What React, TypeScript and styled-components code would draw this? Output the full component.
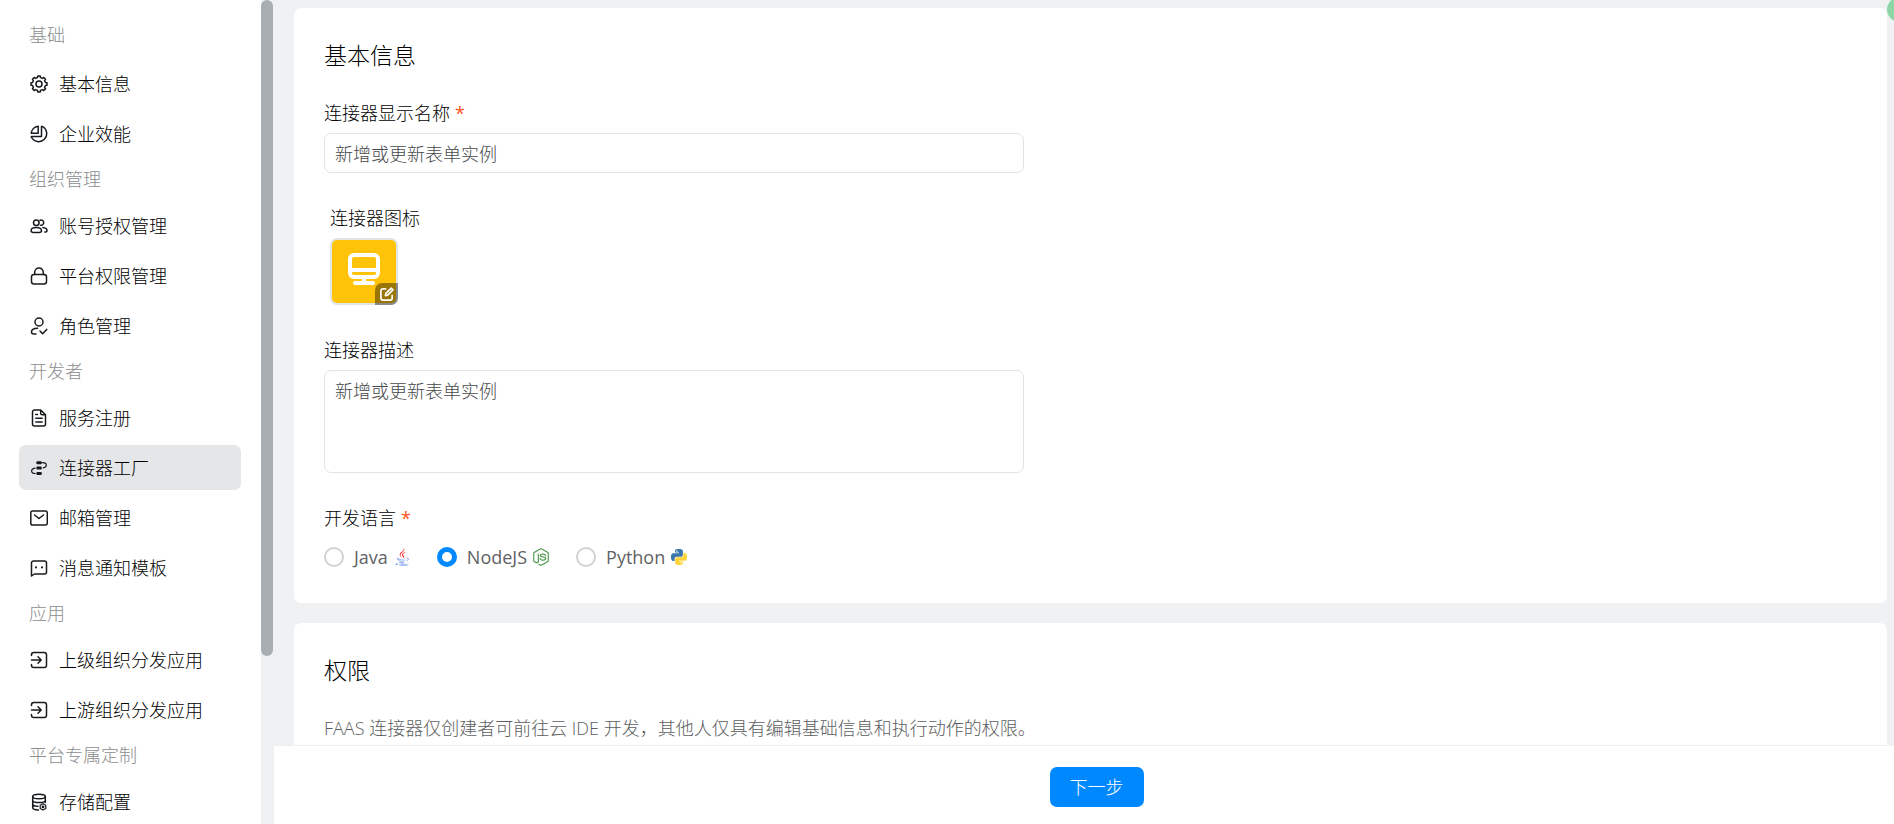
import React from "react";
import styled, { createGlobalStyle, css } from "styled-components";
import { FaJava, FaNodeJs } from "react-icons/fa";

const GlobalStyle = createGlobalStyle`
  * { box-sizing: border-box; }
  body {
    margin: 0;
    background: #f0f1f3;
    color: #000;
    font-family: "Open Sans", "Noto Sans CJK SC", sans-serif;
    font-size: 18px;
    font-weight: 300;
    line-height: 24px;
  }
  button, input, textarea { font: inherit; }
`;

const Page = styled.div`
  display: flex;
  height: 100vh;
  overflow: hidden;
`;

/* Sidebar */

const Sidebar = styled.aside`
  display: flex;
  flex: none;
  width: 274px;
  overflow: hidden;
`;

const Menu = styled.nav`
  flex: 1;
  padding: 17px 20px 0 19px;
  overflow: hidden;
  background: #fff;
`;

const ScrollRail = styled.div`
  flex: none;
  width: 13px;
`;

const ScrollThumb = styled.div`
  width: 12px;
  height: calc(100% - 168px);
  border-radius: 6px;
  background: #a9aeb2;
`;

const MenuGroup = styled.section`
  &:first-child > h2 { margin-bottom: 7px; }
`;

const GroupTitle = styled.h2`
  margin: 0 0 5px;
  padding-left: 10px;
  color: #8c8d8f;
  font-size: 18px;
  font-weight: 300;
  line-height: 37px;
`;

const MenuItem = styled.a<{ $active?: boolean }>`
  display: flex;
  align-items: center;
  gap: 11px;
  height: 45px;
  margin-bottom: 5px;
  padding-left: 11px;
  border-radius: 7px;
  color: #000;
  text-decoration: none;
  white-space: nowrap;
  ${({ $active }) => $active && css`background: #e5e6e8;`}
`;

const MenuIcon = styled.svg`
  flex: none;
  width: 18px;
  height: 18px;
  fill: none;
  stroke: #171a1d;
  color: #171a1d;
  stroke-width: 1.5;
  stroke-linecap: round;
  stroke-linejoin: round;
`;

/* Content */

const Main = styled.main`
  display: flex;
  flex: 1;
  flex-direction: column;
  min-width: 0;
`;

const Content = styled.div`
  display: flex;
  flex: 1;
  flex-direction: column;
  gap: 20px;
  min-height: 0;
  padding: 8px 7px 0 20px;
  overflow: auto;
  scrollbar-width: none;
`;

const Card = styled.section`
  flex: none;
  padding: 30px 30px 27px;
  border-radius: 7px;
  background: #fff;
`;

const CardTitle = styled.h1`
  margin: 0 0 29px;
  font-size: 23px;
  font-weight: 300;
  line-height: 34px;
`;

const Fields = styled.form`
  display: flex;
  flex-direction: column;
  gap: 33px;
`;

const Field = styled.div<{ $inset?: boolean }>`
  display: flex;
  flex-direction: column;
  align-items: flex-start;
  gap: 8px;
  max-width: 700px;
  padding-left: ${({ $inset }) => ($inset ? "6px" : "0")};
`;

const Label = styled.label``;

const RequiredMark = styled.span`
  margin-left: 5px;
  color: #ff5219;
  font-weight: 400;
`;

const controlStyle = css`
  width: 100%;
  border: 1px solid #e3e4e6;
  border-radius: 7px;
  outline: none;
  background: #fff;
  color: #47494b;
`;

const TextInput = styled.input`
  ${controlStyle}
  height: 40px;
  padding: 0 10px;
`;

const TextArea = styled.textarea`
  ${controlStyle}
  display: block;
  height: 103px;
  padding: 8px 10px;
  resize: none;
`;

const IconPicker = styled.button`
  position: relative;
  width: 68px;
  height: 67px;
  padding: 0;
  border: 2px solid #e3e4e6;
  border-radius: 7px;
  background: #ffc409;
  color: #fff;
`;

const EditBadge = styled.span`
  position: absolute;
  right: -2px;
  bottom: -2px;
  display: flex;
  align-items: center;
  justify-content: center;
  width: 23px;
  height: 22px;
  border-radius: 7px 0;
  background: rgba(0, 0, 0, 0.4);
`;

const Radios = styled.div`
  display: flex;
  align-items: center;
  gap: 27px;
  height: 38px;
`;

const RadioLabel = styled.label`
  display: flex;
  align-items: center;
  color: #606265;
  font-weight: 400;
`;

const Radio = styled.input`
  width: 20px;
  height: 20px;
  margin: 0 10px 0 0;
  appearance: none;
  border: 2px solid #d0d2d5;
  border-radius: 50%;
  background: #fff;
  &:checked { border: 5px solid #0089ff; }
`;

const LanguageIcon = styled.span`
  display: flex;
  justify-content: center;
  width: 16px;
  margin-left: 6px;
`;

const JavaLogo = styled(FaJava)`
  fill: url(#java-ink);
`;

const Hint = styled.p`
  margin: 0;
  color: #5c5e60;
`;

const Footer = styled.footer`
  display: flex;
  flex: none;
  justify-content: center;
  padding: 21px 0 17px 25px;
  border-top: 1px solid #eeeff0;
  background: #fff;
`;

const PrimaryButton = styled.button`
  height: 40px;
  padding: 0 20px;
  border: 0;
  border-radius: 7px;
  background: #0089ff;
  color: #fff;
`;

const FloatingDot = styled.div`
  position: fixed;
  top: -3px;
  right: -18px;
  width: 25px;
  height: 25px;
  border-radius: 50%;
  background: #8dd7a7;
`;

/* Outline of an eight-toothed gear centred in an 18 unit box. */
const gearPoints = Array.from({ length: 8 }, (_, tooth) =>
  [
    [-13, 6.6],
    [-9, 8.1],
    [9, 8.1],
    [13, 6.6],
  ].map(([offset, radius]) => {
    const angle = ((tooth * 45 + offset) * Math.PI) / 180;
    return `${(9 + radius * Math.sin(angle)).toFixed(2)},${(9 - radius * Math.cos(angle)).toFixed(2)}`;
  })
)
  .flat()
  .join(" ");

const icons: Record<string, React.ReactNode> = {
  gear: (
    <>
      <polygon points={gearPoints} />
      <circle cx="9" cy="9" r="3" />
    </>
  ),
  pie: (
    <>
      <path d="M12 1.400a8 8 0 1 1-10.600 10.600" />
      <path d="M8.200 1.200v7H1.200A8 8 0 0 1 8.200 1.200Z" />
      <path d="M11.500 1.400v10H1.400" />
    </>
  ),
  users: (
    <>
      <circle cx="6.300" cy="5.800" r="2.800" />
      <path d="M10 3.300a2.600 2.600 0 1 1 .6 4.900" />
      <path d="M6.300 10.400c-3.200 0-5.200 1.300-5.200 3.100 0 1.500 1 2 2.400 2h5.600c1.400 0 2.400-.5 2.400-2 0-1.800-2-3.100-5.200-3.100Z" />
      <path d="M12.800 10.400c2.500.2 4.200 1.400 4.200 3 0 1.100-.8 1.600-2.200 1.600" />
    </>
  ),
  lock: (
    <>
      <rect x="1.500" y="7.500" width="15" height="9.500" rx="2.500" />
      <path d="M4.700 7.500V5.300a4.300 4.300 0 0 1 8.600 0v2.200" />
    </>
  ),
  userCheck: (
    <>
      <circle cx="9" cy="5" r="4" />
      <path d="M7.500 11.300c-3.600.1-6 1.600-6 3.600 0 1.300 1 2 2.400 2H6" />
      <path d="m10 14 2.600 2.700 4.100-4.300" />
    </>
  ),
  document: (
    <>
      <path d="M10.700 1H4.500A2 2 0 0 0 2.500 3v12a2 2 0 0 0 2 2h9a2 2 0 0 0 2-2V5.800L10.700 1v3.500c0 .8.5 1.300 1.300 1.300h3.500" />
      <path d="M5.800 5.500h1.700M5.800 9.300h6.400M5.800 13h6.400" />
    </>
  ),
  connector: (
    <>
      <g fill="currentColor" stroke="none">
        <rect x="6.400" y="2.200" width="5.400" height="3" rx="1" />
        <rect x="6.400" y="7.600" width="5.400" height="3" rx="1" />
        <rect x="6.400" y="13" width="5.400" height="3" rx="1" />
      </g>
      <path strokeWidth="1.200" d="M12.500 3.600c2.400 0 3.800.8 3.800 2.400 0 1.600-1.200 2.600-3 2.800M5 9.200c-2 .3-3.400 1.300-3.400 2.800 0 1.800 1.400 2.500 3.600 2.500" />
    </>
  ),
  mail: (
    <>
      <rect x="0.800" y="2" width="16.500" height="14" rx="1.800" />
      <path d="m4.500 6 4.500 3.500L13.500 6" />
    </>
  ),
  message: (
    <>
      <path d="M1.500 17V4A2 2 0 0 1 3.500 2h11a2 2 0 0 1 2 2v9a2 2 0 0 1-2 2H4.500Z" />
      <path strokeWidth="2" d="M6 8.300v.2M12 8.300v.2" />
    </>
  ),
  enter: (
    <>
      <path d="M1.500 4.500V3.800A2.300 2.300 0 0 1 3.800 1.500h10.400a2.300 2.300 0 0 1 2.300 2.300v10.400a2.300 2.300 0 0 1-2.300 2.300H3.800a2.300 2.300 0 0 1-2.300-2.300v-.7" />
      <path d="M1.500 9h9.300M8 5.800 11.200 9 8 12.200" />
    </>
  ),
  storage: (
    <>
      <ellipse cx="9" cy="3.500" rx="6.300" ry="2.300" />
      <path d="M2.700 3.500v11c0 1.400 2.600 2.400 5.800 2.400M15.300 3.500v6M2.700 7.200c0 1.400 2.800 2.400 6.300 2.400s6.300-1 6.300-2.400M2.700 11c0 1.300 2.300 2.200 5.300 2.300" />
      <path strokeWidth="1.200" d="m13 10.700 2.800 1.600v3.200L13 17.100l-2.800-1.600v-3.200Z" />
      <circle cx="13" cy="13.900" r=".7" />
    </>
  ),
};

type Entry = { icon: string; label: string; active?: boolean };

const groups: { title: string; items: Entry[] }[] = [
  {
    title: "基础",
    items: [
      { icon: "gear", label: "基本信息" },
      { icon: "pie", label: "企业效能" },
    ],
  },
  {
    title: "组织管理",
    items: [
      { icon: "users", label: "账号授权管理" },
      { icon: "lock", label: "平台权限管理" },
      { icon: "userCheck", label: "角色管理" },
    ],
  },
  {
    title: "开发者",
    items: [
      { icon: "document", label: "服务注册" },
      { icon: "connector", label: "连接器工厂", active: true },
      { icon: "mail", label: "邮箱管理" },
      { icon: "message", label: "消息通知模板" },
    ],
  },
  {
    title: "应用",
    items: [
      { icon: "enter", label: "上级组织分发应用" },
      { icon: "enter", label: "上游组织分发应用" },
    ],
  },
  {
    title: "平台专属定制",
    items: [{ icon: "storage", label: "存储配置" }],
  },
];

const PythonLogo = () => (
  <svg width="16" height="16" viewBox="0 0 24 24" aria-hidden="true">
    <path
      fill="#3b77a8"
      d="M14.25.18l.9.2.73.26.59.3.45.32.34.34.25.34.16.33.1.3.04.26.02.2-.01.13V8.5l-.05.63-.13.55-.21.46-.26.38-.3.31-.33.25-.35.19-.35.14-.33.1-.3.07-.26.04-.21.02H8.77l-.69.05-.59.14-.5.22-.41.27-.33.32-.27.35-.2.36-.15.37-.1.35-.07.32-.04.27-.02.21v3.060H3.170l-.21-.03-.28-.07-.32-.12-.35-.18-.36-.26-.36-.36-.35-.46-.32-.59-.28-.73-.21-.88-.14-1.050-.05-1.230.06-1.220.16-1.040.24-.87.32-.71.36-.57.4-.44.42-.33.42-.24.4-.16.36-.1.32-.05.24-.01h.16l.06.01h8.160v-.83H6.180l-.01-2.750-.02-.37.05-.34.11-.31.17-.28.25-.26.31-.23.38-.2.44-.18.51-.15.58-.12.64-.1.71-.06.77-.04.84-.02 1.270.05z"
    />
    <path
      fill="#ffd43b"
      d="M21.1 6.110l.28.06.32.12.35.18.36.27.36.35.35.47.32.59.28.73.21.88.14 1.040.05 1.230-.06 1.230-.16 1.040-.24.86-.32.71-.36.57-.4.45-.42.33-.42.24-.4.16-.36.09-.32.05-.24.02-.16-.01h-8.220v.82h5.840l.01 2.760.02.36-.05.34-.11.31-.17.29-.25.25-.31.24-.38.2-.44.17-.51.15-.58.13-.64.09-.71.07-.77.04-.84.01-1.270-.04-1.070-.14-.9-.2-.73-.25-.59-.3-.45-.33-.34-.34-.25-.34-.16-.33-.1-.3-.04-.25-.02-.2.01-.13v-5.340l.05-.64.13-.54.21-.46.26-.38.3-.32.33-.24.35-.2.35-.14.33-.1.3-.06.26-.04.21-.02.13-.01h5.840l.69-.05.59-.14.5-.21.41-.28.33-.32.27-.35.2-.36.15-.36.1-.35.07-.32.04-.28.02-.21V6.070h2.090l.14.01z"
    />
    <circle cx="8.900" cy="3.200" r="1.100" fill="#fff" />
    <circle cx="15.100" cy="20.800" r="1.100" fill="#fff" />
  </svg>
);

const languages = [
  { name: "Java", icon: <JavaLogo size={18} aria-hidden="true" /> },
  { name: "NodeJS", icon: <FaNodeJs size={18} color="#4d9a4b" aria-hidden="true" /> },
  { name: "Python", icon: <PythonLogo /> },
];

export default function App() {
  return (
    <Page>
      <GlobalStyle />
      <svg width="0" height="0" style={{ position: "absolute" }} aria-hidden="true">
        <linearGradient id="java-ink" x1="0" y1="0" x2="0" y2="1">
          <stop offset="0.54" stopColor="#f4181d" />
          <stop offset="0.54" stopColor="#4678e8" />
        </linearGradient>
      </svg>

      <Sidebar>
        <Menu>
          {groups.map((group) => (
            <MenuGroup key={group.title}>
              <GroupTitle>{group.title}</GroupTitle>
              {group.items.map((item) => (
                <MenuItem
                  key={item.label}
                  href="#"
                  $active={item.active}
                  aria-current={item.active ? "page" : undefined}
                >
                  <MenuIcon viewBox="0 0 18 18" aria-hidden="true">
                    {icons[item.icon]}
                  </MenuIcon>
                  {item.label}
                </MenuItem>
              ))}
            </MenuGroup>
          ))}
        </Menu>
        <ScrollRail>
          <ScrollThumb />
        </ScrollRail>
      </Sidebar>

      <Main>
        <Content>
          <Card>
            <CardTitle>基本信息</CardTitle>
            <Fields>
              <Field>
                <Label htmlFor="connector-name">
                  连接器显示名称<RequiredMark>*</RequiredMark>
                </Label>
                <TextInput id="connector-name" defaultValue="新增或更新表单实例" />
              </Field>

              <Field $inset>
                <Label htmlFor="connector-icon">连接器图标</Label>
                <IconPicker id="connector-icon" type="button">
                  <svg width="34" height="34" viewBox="0 0 34 34" fill="none" stroke="currentColor" strokeWidth="4" aria-hidden="true">
                    <rect x="3" y="3" width="28" height="22" rx="4" />
                    <path d="M3 18h28M17 25v5" />
                    <path d="M8 31h18" strokeLinecap="round" />
                  </svg>
                  <EditBadge>
                    <svg width="14" height="14" viewBox="0 0 15 15" fill="none" stroke="currentColor" strokeWidth="1.800" strokeLinecap="round" strokeLinejoin="round" aria-hidden="true">
                      <path d="M6 2H3a2 2 0 0 0-2 2v8a2 2 0 0 0 2 2h8a2 2 0 0 0 2-2V9" />
                      <path d="M5.800 9.200 6.300 6.800 12 1.200 13.900 3 8.200 8.800Z" />
                    </svg>
                  </EditBadge>
                </IconPicker>
              </Field>

              <Field>
                <Label htmlFor="connector-description">连接器描述</Label>
                <TextArea id="connector-description" defaultValue="新增或更新表单实例" />
              </Field>

              <Field role="radiogroup" aria-labelledby="language-label">
                <span id="language-label">
                  开发语言<RequiredMark>*</RequiredMark>
                </span>
                <Radios>
                  {languages.map(({ name, icon }) => (
                    <RadioLabel key={name}>
                      <Radio type="radio" name="language" value={name} defaultChecked={name === "NodeJS"} />
                      {name}
                      <LanguageIcon>{icon}</LanguageIcon>
                    </RadioLabel>
                  ))}
                </Radios>
              </Field>
            </Fields>
          </Card>

          <Card>
            <CardTitle as="h2">权限</CardTitle>
            <Hint>FAAS 连接器仅创建者可前往云 IDE 开发，其他人仅具有编辑基础信息和执行动作的权限。</Hint>
          </Card>
        </Content>

        <Footer>
          <PrimaryButton type="button">下一步</PrimaryButton>
        </Footer>
      </Main>

      <FloatingDot />
    </Page>
  );
}
